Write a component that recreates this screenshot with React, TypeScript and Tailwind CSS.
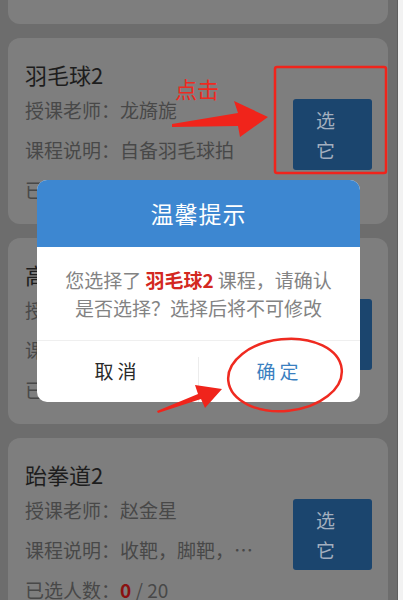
import React from "react";

type Course = {
    title: string
    teacher: string
    desc: string
    count: number
    total: number
}

const courses: Course[] = [
    {title: "羽毛球2", teacher: "龙旖旎", desc: "自备羽毛球拍", count: 3, total: 20},
    {title: "高尔夫2", teacher: "王建国", desc: "自备球杆", count: 5, total: 20},
    {title: "跆拳道2", teacher: "赵金星", desc: "收靶，脚靶，…", count: 0, total: 20},
]

const CourseCard = ({course}: {course: Course}) => {
    return (
        <div className="ml-[8px] w-[380px] h-[186px] shrink-0 rounded-[12px] bg-[#7e7e7e] flex pl-[17px] pr-[16px] pt-[22px]">
            <div className="flex-1 min-w-0 whitespace-nowrap">
                <div className="text-[22px] leading-[28px] text-[#1d1d1d]">{course.title}</div>
                <div className="mt-[2px] text-[19px] leading-[40px] text-[#484848]">
                    <div>授课老师：{course.teacher}</div>
                    <div>课程说明：{course.desc}</div>
                    <div>
                        已选人数：<span className="font-bold text-[#8a1111]">{course.count}</span> / {course.total}
                    </div>
                </div>
            </div>
            <div className="mt-[39px] w-[79px] h-[71px] shrink-0 rounded-[3px] bg-[#1b456e] flex flex-col items-center justify-center pr-[14px] text-[19px] leading-[30px] text-[#a3afbf]">
                <span>选</span>
                <span>它</span>
            </div>
        </div>
    )
}

const App = () => {
    return (
        <div className="relative w-[403px] h-[600px] overflow-hidden flex font-['Noto_Sans_CJK_SC','Noto_Sans',sans-serif]">
            <div className="w-[398px] h-full bg-[#6d6d6d] border-r border-[#5e5e5e] flex flex-col gap-[14px]">
                <div className="ml-[8px] w-[380px] h-[24px] shrink-0 rounded-b-[12px] bg-[#7e7e7e]"></div>
                {courses.map((c) => (
                    <CourseCard key={c.title} course={c}/>
                ))}
            </div>
            <div className="flex-1 bg-[#f2f2f2]"></div>

            {/* confirm dialog */}
            <div className="absolute left-[37px] top-[180px] w-[323px] h-[222px] rounded-[10px] overflow-hidden bg-white flex flex-col">
                <div className="h-[67px] bg-[#3d87d1] flex items-center justify-center text-white text-[23px] tracking-[1px]">温馨提示</div>
                <div className="h-[93px] flex flex-col items-center justify-center text-[19px] leading-[28px] text-[#838383] whitespace-nowrap">
                    <div>您选择了 <span className="font-bold text-[#d3281f]">羽毛球2</span> 课程，请确认</div>
                    <div>是否选择？选择后将不可修改</div>
                </div>
                <div className="flex-1 border-t border-[#efefef] flex">
                    <div className="flex-1 flex items-center justify-center text-[19px] text-[#2a2a2a] tracking-[4px]">取消</div>
                    <div className="w-px mt-[16px] bg-[#ececec]"></div>
                    <div className="flex-1 flex items-center justify-center text-[19px] text-[#3a7fc0] tracking-[4px]">确定</div>
                </div>
            </div>

            {/* annotations */}
            <span className="absolute left-[175px] top-[74px] text-[22px] leading-[28px] text-[#ee2a21]">点击</span>
            <svg className="absolute left-0 top-0 pointer-events-none" width="403" height="600" viewBox="0 0 403 600">
                <rect x="275" y="67" width="111" height="106" rx="2" fill="none" stroke="#f0241b" strokeWidth="2.5"/>
                <polygon points="172,124 238,113 234,101 268,117 240,137 238,126 172,127" fill="#f0241b"/>
                <ellipse cx="285" cy="375" rx="57" ry="36" transform="rotate(-6 285 375)" fill="none" stroke="#ef2a20" strokeWidth="2.5"/>
                <polygon points="157,411 198,394 195,385 222,389 205,408 201,399 158,413" fill="#f0241b"/>
            </svg>
        </div>
    )
}

export default App
